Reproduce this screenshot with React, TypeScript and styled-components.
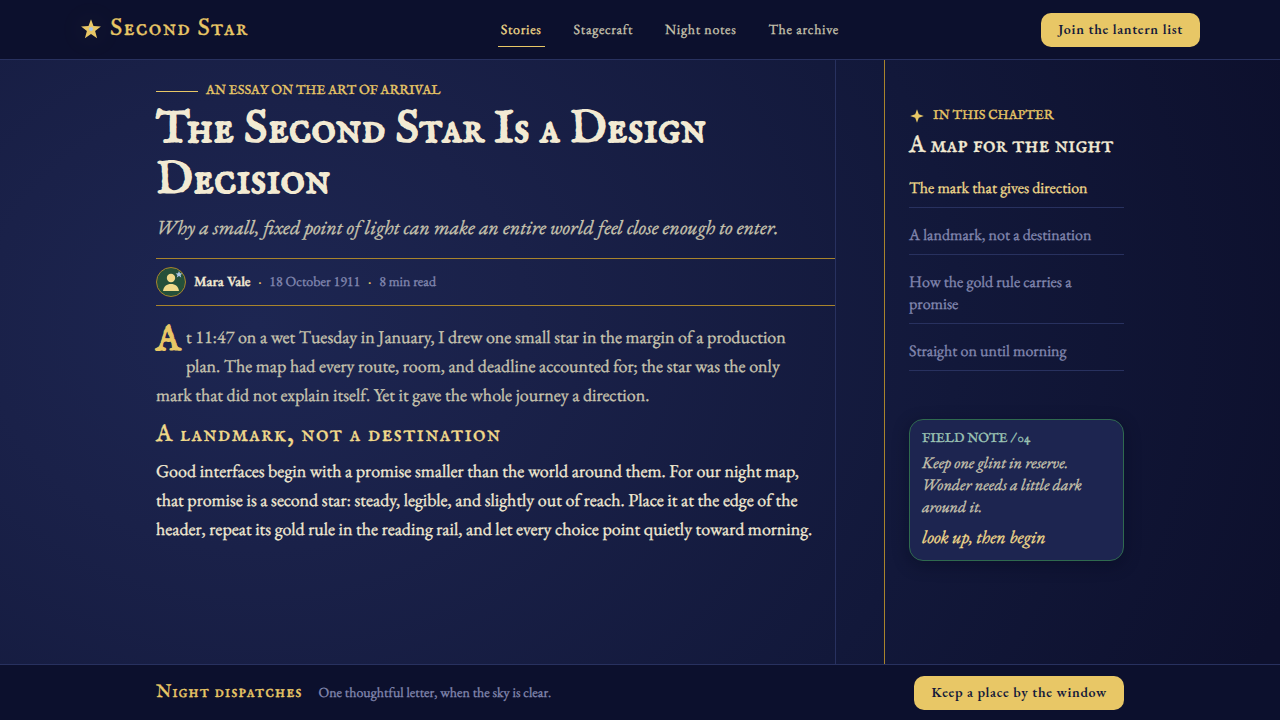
import React from "react";
import styled, { createGlobalStyle } from "styled-components";

const color = {
  ink: "#0c102d",
  line: "#28315f",
  gold: "#e8c766",
  goldSoft: "#f0d98a",
  rule: "#a8842c",
  cream: "#f2ead3",
  sand: "#c8c4ae",
  mist: "#8388b0",
};

const display = `"IM Fell English SC", "Liberation Serif", serif`;
const text = `"EB Garamond", "Liberation Serif", serif`;

const GlobalStyle = createGlobalStyle`
  *, *::before, *::after { box-sizing: border-box; }
  body {
    margin: 0;
    background: ${color.ink};
    color: ${color.cream};
    font-family: ${text};
    text-rendering: geometricPrecision;
    -webkit-text-stroke: 0.02em currentColor;
  }
  h1, h2, p, ul { margin: 0; padding: 0; }
`;

const Page = styled.div`
  min-height: 100vh;
  display: flex;
  flex-direction: column;
  background: radial-gradient(ellipse 1080px 900px at 20% 45%, #1d2652 0%, #1a2149 25%, #12183a 65%, #0d102d 100%);
`;

const Header = styled.header`
  display: grid;
  grid-template-columns: 7fr auto 6fr;
  align-items: center;
  height: 60px;
  padding: 0 80px;
  background: ${color.ink};
  border-bottom: 1px solid ${color.line};
`;

const Brand = styled.a`
  display: flex;
  align-items: center;
  gap: 8px;
  padding-bottom: 2px;
  color: ${color.gold};
  font-family: ${display};
  font-size: 24px;
  letter-spacing: 0.05em;
  line-height: 32px;
  text-decoration: none;
`;

const Nav = styled.nav`
  display: flex;
  gap: 26px;
`;

const NavLink = styled.a<{ $active?: boolean }>`
  padding: 8px 3px 6px;
  border-bottom: 1px solid ${(p) => (p.$active ? color.gold : "transparent")};
  color: ${(p) => (p.$active ? color.goldSoft : color.sand)};
  font-size: 14px;
  letter-spacing: 0.05em;
  line-height: 20px;
  text-decoration: none;
`;

const Button = styled.button`
  justify-self: end;
  height: 34px;
  padding: 0 17px 2px;
  border: 0;
  border-radius: 10px;
  background: ${color.gold};
  color: #141a3a;
  font-family: ${text};
  font-size: 14px;
  font-weight: 600;
  letter-spacing: 0.05em;
  -webkit-text-stroke: 0;
  cursor: pointer;
`;

const Layout = styled.main`
  flex: 1;
  display: grid;
  grid-template-columns: minmax(0, 1fr) 240px;
  gap: 48px;
  width: 100%;
  max-width: 968px;
  margin: 0 auto;
`;

const Article = styled.article`
  padding: 21px 0 24px;
  border-right: 1px solid ${color.line};
`;

const Kicker = styled.p`
  display: flex;
  align-items: center;
  gap: 8px;
  color: ${color.gold};
  font-family: ${display};
  font-size: 13px;
  line-height: 20px;
  text-transform: uppercase;
`;

const KickerRule = styled.span`
  width: 42px;
  height: 1px;
  background: ${color.gold};
`;

const Title = styled.h1`
  margin-top: 3px;
  font-family: ${display};
  font-size: 46px;
  font-weight: 400;
  line-height: 51px;
  -webkit-text-stroke: 0.035em currentColor;
`;

const Deck = styled.p`
  margin-top: 6px;
  color: ${color.sand};
  font-size: 20px;
  font-style: italic;
  line-height: 30px;
`;

const Byline = styled.div`
  display: flex;
  align-items: center;
  gap: 8px;
  margin-top: 16px;
  padding: 8px 0;
  border-top: 1px solid ${color.rule};
  border-bottom: 1px solid ${color.rule};
  color: ${color.mist};
  font-size: 14px;
  line-height: 20px;
`;

const Author = styled.strong`
  color: ${color.cream};
  font-weight: 600;
`;

const Dot = styled.span`
  color: ${color.gold};
`;

const Paragraph = styled.p<{ $lead?: boolean }>`
  max-width: 660px;
  margin-top: ${(p) => (p.$lead ? 17 : 7)}px;
  color: ${(p) => (p.$lead ? color.sand : color.cream)};
  font-size: 18px;
  line-height: 29px;
`;

const DropCap = styled.span`
  float: left;
  width: 30px;
  height: 58px;
  color: ${color.gold};
  font-family: ${display};
  font-size: 36px;
  line-height: 36px;
  -webkit-text-stroke: 0.035em currentColor;
`;

const SectionTitle = styled.h2<{ $gold?: boolean }>`
  color: ${(p) => (p.$gold ? color.goldSoft : color.cream)};
  margin-top: ${(p) => (p.$gold ? 10 : 5)}px;
  font-family: ${display};
  font-size: 24px;
  font-weight: 400;
  letter-spacing: ${(p) => (p.$gold ? "0.05em" : "normal")};
  line-height: 30px;
`;

const Rail = styled.aside`
  padding: 46px 0 48px 24px;
  border-left: 1px solid ${color.rule};
`;

const Chapters = styled.ul`
  display: flex;
  flex-direction: column;
  gap: 8px;
  margin-top: 8px;
  list-style: none;
`;

const ChapterLink = styled.a<{ $active?: boolean }>`
  display: block;
  padding: 8px 0;
  border-bottom: 1px solid ${color.line};
  color: ${(p) => (p.$active ? color.goldSoft : color.mist)};
  font-size: 16px;
  line-height: 22px;
  text-decoration: none;
`;

const Note = styled.section`
  margin-top: 48px;
  padding: 9px 12px 11px;
  border: 1px solid #2f6a4f;
  border-radius: 14px;
  background: #1d2550;
  box-shadow: 0 4px 16px rgba(6, 8, 28, 0.4);
`;

const NoteLabel = styled.p`
  color: #9cc4b4;
  font-family: ${display};
  font-size: 13px;
  line-height: 20px;
`;

const NoteText = styled.p`
  margin-top: 3px;
  color: ${color.sand};
  font-size: 16px;
  font-style: italic;
  line-height: 22px;
`;

const NoteSign = styled.p`
  margin-top: 9px;
  color: ${color.goldSoft};
  font-size: 18px;
  font-style: italic;
  line-height: 22px;
`;

const Footer = styled.footer`
  background: ${color.ink};
  border-top: 1px solid ${color.line};
`;

const FooterInner = styled.div`
  display: flex;
  align-items: center;
  gap: 16px;
  width: 100%;
  max-width: 968px;
  height: 55px;
  margin: 0 auto;
`;

const FooterTitle = styled.h2`
  color: ${color.gold};
  font-family: ${display};
  font-size: 18px;
  font-weight: 400;
  letter-spacing: 0.05em;
  line-height: 24px;
`;

const FooterText = styled.p`
  flex: 1;
  color: ${color.mist};
  font-size: 14px;
  line-height: 20px;
`;

const StarMark = styled.svg`
  filter: drop-shadow(0 0 14px rgba(232, 199, 102, 0.12));
`;

const StarLogo = () => (
  <StarMark width="22" height="22" viewBox="0 0 22 22" aria-hidden="true">
    <path d="M11 1.2l2.5 6.9 7.4.3-5.8 4.6 2 7.2L11 16l-6.1 4.2 2-7.2L1.1 8.4l7.4-.3z" fill={color.gold} />
    <circle cx="11" cy="11" r="2" fill="#a9c4e6" />
  </StarMark>
);

const Glint = () => (
  <svg width="16" height="16" viewBox="0 0 16 16" aria-hidden="true">
    <path d="M8 1.200l1.800 5 5 1.800-5 1.800L8 14.800 6.200 9.800 1.200 8l5-1.800z" fill={color.gold} />
  </svg>
);

const Avatar = () => (
  <svg width="30" height="30" viewBox="0 0 30 30" aria-hidden="true">
    <circle cx="15" cy="15" r="14.5" fill="#25503a" stroke={color.rule} />
    <circle cx="15" cy="11" r="4.2" fill={color.goldSoft} />
    <path d="M7 24c.6-4.400 3.600-7 8-7s7.400 2.600 8 7z" fill={color.goldSoft} />
    <path d="M23 4l1 2.200 2.400.2-1.800 1.600.6 2.400L23 9.100l-2.200 1.300.6-2.400-1.800-1.600 2.400-.2z" fill="#a9c4e6" />
  </svg>
);

const navItems = ["Stories", "Stagecraft", "Night notes", "The archive"];
const chapters = [
  "The mark that gives direction",
  "A landmark, not a destination",
  "How the gold rule carries a promise",
  "Straight on until morning",
];

export default function App() {
  return (
    <>
      <GlobalStyle />
      <Page>
        <Header>
          <Brand href="#home">
            <StarLogo />
            Second Star
          </Brand>
          <Nav aria-label="Main">
            {navItems.map((item, i) => (
              <NavLink key={item} href="#nav" $active={i === 0}>
                {item}
              </NavLink>
            ))}
          </Nav>
          <Button type="button">Join the lantern list</Button>
        </Header>
        <Layout>
          <Article>
            <Kicker>
              <KickerRule />
              An essay on the art of arrival
            </Kicker>
            <Title>The Second Star Is a Design Decision</Title>
            <Deck>Why a small, fixed point of light can make an entire world feel close enough to enter.</Deck>
            <Byline>
              <Avatar />
              <Author>Mara Vale</Author>
              <Dot>·</Dot>
              <time dateTime="1911-10-18">18 October 1911</time>
              <Dot>·</Dot>
              <span>8 min read</span>
            </Byline>
            <Paragraph $lead>
              <DropCap>A</DropCap>t 11:47 on a wet Tuesday in January, I drew one small star in the margin of a
              production plan. The map had every route, room, and deadline accounted for; the star was the only mark
              that did not explain itself. Yet it gave the whole journey a direction.
            </Paragraph>
            <SectionTitle $gold>A landmark, not a destination</SectionTitle>
            <Paragraph>
              Good interfaces begin with a promise smaller than the world around them. For our night map, that promise
              is a second star: steady, legible, and slightly out of reach. Place it at the edge of the header, repeat
              its gold rule in the reading rail, and let every choice point quietly toward morning.
            </Paragraph>
          </Article>
          <Rail>
            <Kicker>
              <Glint />
              In this chapter
            </Kicker>
            <SectionTitle>A map for the night</SectionTitle>
            <Chapters>
              {chapters.map((item, i) => (
                <li key={item}>
                  <ChapterLink href="#chapter" $active={i === 0}>
                    {item}
                  </ChapterLink>
                </li>
              ))}
            </Chapters>
            <Note>
              <NoteLabel>FIELD NOTE / 04</NoteLabel>
              <NoteText>Keep one glint in reserve. Wonder needs a little dark around it.</NoteText>
              <NoteSign>look up, then begin</NoteSign>
            </Note>
          </Rail>
        </Layout>
        <Footer>
          <FooterInner>
            <FooterTitle>Night dispatches</FooterTitle>
            <FooterText>One thoughtful letter, when the sky is clear.</FooterText>
            <Button type="button">Keep a place by the window</Button>
          </FooterInner>
        </Footer>
      </Page>
    </>
  );
}
